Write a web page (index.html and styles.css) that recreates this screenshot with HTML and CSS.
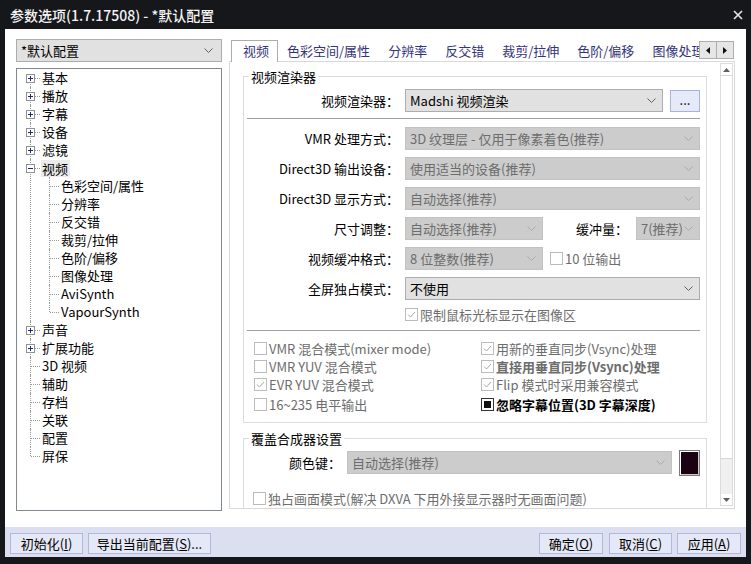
FILE: index.html
```html
<!DOCTYPE html>
<html lang="zh-CN">
<head>
    <meta charset="UTF-8">
    <title>参数选项</title>
    <link rel="stylesheet" href="styles.css">
</head>
<body>
    <div class="window">
        <div class="titlebar">
            <span class="title">参数选项(1.7.17508) - *默认配置</span>
            <svg class="close" width="10" height="10" viewBox="0 0 10 10"><path d="M1 1l8 8M9 1l-8 8" stroke="#e8e8e8" stroke-width="1.6"/></svg>
        </div>
        <div class="client">
            <div class="main">
                <div class="side">
                    <div class="combo">
                        <span class="val">*默认配置</span>
                        <svg class="chev" width="9" height="5" viewBox="0 0 9 5"><path d="M0.5 0.5l4 4 4-4" fill="none" stroke="#606060"/></svg>
                    </div>
                    <div class="tree-box">
                        <ul class="tree">
                            <li><div class="row"><svg class="exp" width="9" height="9" viewBox="0 0 9 9"><rect x="0.5" y="0.5" width="8" height="8" fill="#fff" stroke="#919191"/><path d="M2 4.5h5M4.5 2v5" stroke="#1f2b6b"/></svg><span class="label">基本</span></div></li>
                            <li><div class="row"><svg class="exp" width="9" height="9" viewBox="0 0 9 9"><rect x="0.5" y="0.5" width="8" height="8" fill="#fff" stroke="#919191"/><path d="M2 4.5h5M4.5 2v5" stroke="#1f2b6b"/></svg><span class="label">播放</span></div></li>
                            <li><div class="row"><svg class="exp" width="9" height="9" viewBox="0 0 9 9"><rect x="0.5" y="0.5" width="8" height="8" fill="#fff" stroke="#919191"/><path d="M2 4.5h5M4.5 2v5" stroke="#1f2b6b"/></svg><span class="label">字幕</span></div></li>
                            <li><div class="row"><svg class="exp" width="9" height="9" viewBox="0 0 9 9"><rect x="0.5" y="0.5" width="8" height="8" fill="#fff" stroke="#919191"/><path d="M2 4.5h5M4.5 2v5" stroke="#1f2b6b"/></svg><span class="label">设备</span></div></li>
                            <li><div class="row"><svg class="exp" width="9" height="9" viewBox="0 0 9 9"><rect x="0.5" y="0.5" width="8" height="8" fill="#fff" stroke="#919191"/><path d="M2 4.5h5M4.5 2v5" stroke="#1f2b6b"/></svg><span class="label">滤镜</span></div></li>
                            <li>
                                <div class="row"><svg class="exp" width="9" height="9" viewBox="0 0 9 9"><rect x="0.5" y="0.5" width="8" height="8" fill="#fff" stroke="#919191"/><path d="M2 4.5h5" stroke="#1f2b6b"/></svg><span class="label sel">视频</span></div>
                                <ul class="sub">
                                    <li><div class="row"><span class="label">色彩空间/属性</span></div></li>
                                    <li><div class="row"><span class="label">分辨率</span></div></li>
                                    <li><div class="row"><span class="label">反交错</span></div></li>
                                    <li><div class="row"><span class="label">裁剪/拉伸</span></div></li>
                                    <li><div class="row"><span class="label">色阶/偏移</span></div></li>
                                    <li><div class="row"><span class="label">图像处理</span></div></li>
                                    <li><div class="row"><span class="label">AviSynth</span></div></li>
                                    <li><div class="row"><span class="label">VapourSynth</span></div></li>
                                </ul>
                            </li>
                            <li><div class="row"><svg class="exp" width="9" height="9" viewBox="0 0 9 9"><rect x="0.5" y="0.5" width="8" height="8" fill="#fff" stroke="#919191"/><path d="M2 4.5h5M4.5 2v5" stroke="#1f2b6b"/></svg><span class="label">声音</span></div></li>
                            <li><div class="row"><svg class="exp" width="9" height="9" viewBox="0 0 9 9"><rect x="0.5" y="0.5" width="8" height="8" fill="#fff" stroke="#919191"/><path d="M2 4.5h5M4.5 2v5" stroke="#1f2b6b"/></svg><span class="label">扩展功能</span></div></li>
                            <li><div class="row"><span class="label">3D 视频</span></div></li>
                            <li><div class="row"><span class="label">辅助</span></div></li>
                            <li><div class="row"><span class="label">存档</span></div></li>
                            <li><div class="row"><span class="label">关联</span></div></li>
                            <li><div class="row"><span class="label">配置</span></div></li>
                            <li><div class="row"><span class="label">屏保</span></div></li>
                        </ul>
                    </div>
                </div>

                <div class="content">
                    <div class="tabbar">
                        <div class="tabs">
                            <span class="tab active">视频</span>
                            <span class="tab">色彩空间/属性</span>
                            <span class="tab">分辨率</span>
                            <span class="tab">反交错</span>
                            <span class="tab">裁剪/拉伸</span>
                            <span class="tab">色阶/偏移</span>
                            <span class="tab">图像处理</span>
                        </div>
                        <div class="tab-arrows">
                            <span class="arrow-btn"><svg width="4" height="7" viewBox="0 0 4 7"><path d="M4 0v7L0 3.5z" fill="#111"/></svg></span>
                            <span class="arrow-btn"><svg width="4" height="7" viewBox="0 0 4 7"><path d="M0 0v7l4-3.5z" fill="#111"/></svg></span>
                        </div>
                    </div>

                    <div class="panel">
                        <div class="panel-body">
                            <div class="group">
                                <span class="group-title">视频渲染器</span>
                                <div class="field first">
                                    <span class="lbl">视频渲染器：</span>
                                    <div class="combo grow">
                                        <span class="val">Madshi 视频渲染</span>
                                        <svg class="chev" width="9" height="5" viewBox="0 0 9 5"><path d="M0.5 0.5l4 4 4-4" fill="none" stroke="#606060"/></svg>
                                    </div>
                                    <span class="dots-btn">...</span>
                                </div>
                                <div class="sep"></div>
                                <div class="field">
                                    <span class="lbl">VMR 处理方式：</span>
                                    <div class="combo grow off">
                                        <span class="val">3D 纹理层 - 仅用于像素着色(推荐)</span>
                                        <svg class="chev" width="9" height="5" viewBox="0 0 9 5"><path d="M0.5 0.5l4 4 4-4" fill="none" stroke="#ababab"/></svg>
                                    </div>
                                </div>
                                <div class="field">
                                    <span class="lbl">Direct3D 输出设备：</span>
                                    <div class="combo grow off">
                                        <span class="val">使用适当的设备(推荐)</span>
                                        <svg class="chev" width="9" height="5" viewBox="0 0 9 5"><path d="M0.5 0.5l4 4 4-4" fill="none" stroke="#ababab"/></svg>
                                    </div>
                                </div>
                                <div class="field">
                                    <span class="lbl">Direct3D 显示方式：</span>
                                    <div class="combo grow off">
                                        <span class="val">自动选择(推荐)</span>
                                        <svg class="chev" width="9" height="5" viewBox="0 0 9 5"><path d="M0.5 0.5l4 4 4-4" fill="none" stroke="#ababab"/></svg>
                                    </div>
                                </div>
                                <div class="field">
                                    <span class="lbl">尺寸调整：</span>
                                    <div class="combo short off">
                                        <span class="val">自动选择(推荐)</span>
                                        <svg class="chev" width="9" height="5" viewBox="0 0 9 5"><path d="M0.5 0.5l4 4 4-4" fill="none" stroke="#ababab"/></svg>
                                    </div>
                                    <span class="lbl-inline">缓冲量：</span>
                                    <div class="combo tiny off">
                                        <span class="val">7(推荐)</span>
                                        <svg class="chev" width="9" height="5" viewBox="0 0 9 5"><path d="M0.5 0.5l4 4 4-4" fill="none" stroke="#ababab"/></svg>
                                    </div>
                                </div>
                                <div class="field">
                                    <span class="lbl">视频缓冲格式：</span>
                                    <div class="combo short off">
                                        <span class="val">8 位整数(推荐)</span>
                                        <svg class="chev" width="9" height="5" viewBox="0 0 9 5"><path d="M0.5 0.5l4 4 4-4" fill="none" stroke="#ababab"/></svg>
                                    </div>
                                    <label class="chk off after-combo">
                                        <svg class="box" width="13" height="13" viewBox="0 0 13 13"><rect x="0.5" y="0.5" width="12" height="12" fill="#fff" stroke="#bcbcbc"/></svg>10 位输出
                                    </label>
                                </div>
                                <div class="field last">
                                    <span class="lbl">全屏独占模式：</span>
                                    <div class="combo grow">
                                        <span class="val">不使用</span>
                                        <svg class="chev" width="9" height="5" viewBox="0 0 9 5"><path d="M0.5 0.5l4 4 4-4" fill="none" stroke="#606060"/></svg>
                                    </div>
                                </div>
                                <label class="chk off indent">
                                    <svg class="box" width="13" height="13" viewBox="0 0 13 13"><rect x="0.5" y="0.5" width="12" height="12" fill="#fff" stroke="#bcbcbc"/><path d="M3 6.5l2.5 2.5 4.5-5" fill="none" stroke="#a8a8a8"/></svg>限制鼠标光标显示在图像区
                                </label>
                                <div class="sep lower"></div>
                                <div class="checks">
                                    <label class="chk off"><svg class="box" width="13" height="13" viewBox="0 0 13 13"><rect x="0.5" y="0.5" width="12" height="12" fill="#fff" stroke="#bcbcbc"/></svg>VMR 混合模式(mixer mode)</label>
                                    <label class="chk off"><svg class="box" width="13" height="13" viewBox="0 0 13 13"><rect x="0.5" y="0.5" width="12" height="12" fill="#fff" stroke="#bcbcbc"/><path d="M3 6.5l2.5 2.5 4.5-5" fill="none" stroke="#a8a8a8"/></svg>用新的垂直同步(Vsync)处理</label>
                                    <label class="chk off"><svg class="box" width="13" height="13" viewBox="0 0 13 13"><rect x="0.5" y="0.5" width="12" height="12" fill="#fff" stroke="#bcbcbc"/></svg>VMR YUV 混合模式</label>
                                    <label class="chk off strong"><svg class="box" width="13" height="13" viewBox="0 0 13 13"><rect x="0.5" y="0.5" width="12" height="12" fill="#fff" stroke="#bcbcbc"/><path d="M3 6.5l2.5 2.5 4.5-5" fill="none" stroke="#a8a8a8"/></svg>直接用垂直同步(Vsync)处理</label>
                                    <label class="chk off"><svg class="box" width="13" height="13" viewBox="0 0 13 13"><rect x="0.5" y="0.5" width="12" height="12" fill="#fff" stroke="#bcbcbc"/><path d="M3 6.5l2.5 2.5 4.5-5" fill="none" stroke="#a8a8a8"/></svg>EVR YUV 混合模式</label>
                                    <label class="chk off"><svg class="box" width="13" height="13" viewBox="0 0 13 13"><rect x="0.5" y="0.5" width="12" height="12" fill="#fff" stroke="#bcbcbc"/><path d="M3 6.5l2.5 2.5 4.5-5" fill="none" stroke="#a8a8a8"/></svg>Flip 模式时采用兼容模式</label>
                                    <label class="chk off"><svg class="box" width="13" height="13" viewBox="0 0 13 13"><rect x="0.5" y="0.5" width="12" height="12" fill="#fff" stroke="#bcbcbc"/></svg>16~235 电平输出</label>
                                    <label class="chk strong"><svg class="box" width="13" height="13" viewBox="0 0 13 13"><rect x="0.5" y="0.5" width="12" height="12" fill="#fff" stroke="#333"/><rect x="3" y="3" width="7" height="7" fill="#111"/></svg>忽略字幕位置(3D 字幕深度)</label>
                                </div>
                            </div>

                            <div class="group second">
                                <span class="group-title">覆盖合成器设置</span>
                                <div class="field first">
                                    <span class="lbl narrow">颜色键：</span>
                                    <div class="combo grow off">
                                        <span class="val">自动选择(推荐)</span>
                                        <svg class="chev" width="9" height="5" viewBox="0 0 9 5"><path d="M0.5 0.5l4 4 4-4" fill="none" stroke="#ababab"/></svg>
                                    </div>
                                    <span class="swatch"></span>
                                </div>
                                <label class="chk off exclusive"><svg class="box" width="13" height="13" viewBox="0 0 13 13"><rect x="0.5" y="0.5" width="12" height="12" fill="#fff" stroke="#bcbcbc"/></svg>独占画面模式(解决 DXVA 下用外接显示器时无画面问题)</label>
                            </div>
                        </div>
                        <div class="vscroll">
                            <span class="sb-btn"><svg width="7" height="4" viewBox="0 0 7 4"><path d="M0 4h7L3.5 0z" fill="#606060"/></svg></span>
                            <span class="sb-thumb"></span>
                            <span class="sb-track"></span>
                            <span class="sb-btn"><svg width="7" height="4" viewBox="0 0 7 4"><path d="M0 0h7L3.5 4z" fill="#606060"/></svg></span>
                        </div>
                    </div>
                </div>
            </div>

            <div class="footer">
                <span class="btn w-init">初始化(<u>I</u>)</span>
                <span class="btn w-export">导出当前配置(<u>S</u>)...</span>
                <span class="btn w-ok push">确定(<u>O</u>)</span>
                <span class="btn w-cancel">取消(<u>C</u>)</span>
                <span class="btn w-apply">应用(<u>A</u>)</span>
            </div>
        </div>
    </div>
</body>
</html>
```

FILE: styles.css
```css
body {
    margin: 0;
    background-color: #16171b;
    font-family: "Noto Sans CJK SC", "Noto Sans", sans-serif;
    font-size: 13px;
    color: #000;
}

.window {
    width: 751px;
    height: 564px;
    box-sizing: border-box;
    padding: 0 5px 7px;
    display: flex;
    flex-direction: column;
}

.titlebar {
    height: 29px;
    flex: none;
    display: flex;
    align-items: center;
    justify-content: space-between;
    padding: 0 3px 0 5px;
    color: #f4f4f4;
    font-size: 14px;
    font-weight: 500;
}

.client {
    flex: 1;
    background-color: #fff;
    display: flex;
    flex-direction: column;
    min-height: 0;
}

.main {
    flex: 1;
    display: flex;
    gap: 7px;
    padding: 10px 11px 0;
    min-height: 0;
}

/* left column */
.side {
    width: 206px;
    flex: none;
    display: flex;
    flex-direction: column;
}

.combo {
    height: 23px;
    box-sizing: border-box;
    border: 1px solid #adadad;
    background-color: #e1e1e1;
    display: flex;
    align-items: center;
    padding: 0 6px 0 4px;
    white-space: nowrap;
}

.combo .val {
    flex: 1;
    overflow: hidden;
    line-height: 21px;
}

.combo.off {
    background-color: #cccccc;
    border-color: #c2c2c2;
    color: #6d6d6d;
}

.side .combo {
    margin-bottom: 6px;
    padding-right: 8px;
}

.tree-box {
    height: 443px;
    box-sizing: border-box;
    border: 1px solid #828790;
}

.tree,
.tree ul {
    list-style: none;
    margin: 0;
    padding: 0;
}

.tree li {
    position: relative;
}

.tree .row {
    position: relative;
    height: 18px;
    display: flex;
    align-items: center;
    padding-left: 25px;
}

.tree .label {
    line-height: 18px;
    white-space: nowrap;
}

.tree .label.sel {
    background-color: #ebebeb;
    line-height: 17px;
    margin-left: -1px;
    padding: 0 2px 0 1px;
}

.tree > li::before {
    content: "";
    position: absolute;
    left: 13px;
    top: 0;
    bottom: 0;
    border-left: 1px dotted #9a9a9a;
}

.tree > li:first-child::before {
    top: 9px;
}

.tree > li:last-child::before {
    bottom: auto;
    height: 9px;
}

.tree > li > .row::before {
    content: "";
    position: absolute;
    left: 14px;
    top: 9px;
    width: 9px;
    border-top: 1px dotted #9a9a9a;
}

.tree .exp {
    position: absolute;
    left: 9px;
    top: 5px;
    z-index: 1;
}

.tree .sub li::before {
    content: "";
    position: absolute;
    left: 32px;
    top: 0;
    bottom: 0;
    border-left: 1px dotted #9a9a9a;
}

.tree .sub li:last-child::before {
    bottom: auto;
    height: 9px;
}

.tree .sub .row {
    padding-left: 44px;
}

.tree .sub .row::before {
    content: "";
    position: absolute;
    left: 33px;
    top: 9px;
    width: 9px;
    border-top: 1px dotted #9a9a9a;
}

/* right column */
.content {
    flex: 1;
    min-width: 0;
    display: flex;
    flex-direction: column;
}

.tabbar {
    height: 22px;
    flex: none;
    display: flex;
    position: relative;
    z-index: 1;
}

.tabs {
    flex: 1;
    height: 23px;
    margin-bottom: -1px;
    padding-left: 2px;
    display: flex;
    align-items: flex-end;
    overflow: hidden;
}

.tab {
    flex: none;
    height: 21px;
    line-height: 19px;
    padding: 0 9px;
    color: #34347a;
    white-space: nowrap;
}

.tab.active {
    height: 22px;
    box-sizing: border-box;
    line-height: 19px;
    padding: 0 8px 0 11px;
    background-color: #fff;
    border: 1px solid #acacac;
    border-bottom: none;
}

.tab-arrows {
    flex: none;
    display: flex;
    margin: 2px 1px 0 0;
}

.arrow-btn {
    width: 18px;
    height: 18px;
    box-sizing: border-box;
    border: 1px solid #adadad;
    background-color: #e6e6e6;
    display: flex;
    align-items: center;
    justify-content: center;
}

.arrow-btn + .arrow-btn {
    margin-left: -1px;
}

.panel {
    height: 448px;
    flex: none;
    box-sizing: border-box;
    border: 1px solid #d9d9d9;
    display: flex;
}

.panel-body {
    flex: 1;
    min-width: 0;
    overflow: hidden;
    padding: 14px 0 0 13px;
}

.group {
    width: 464px;
    box-sizing: border-box;
    border: 1px solid #dcdcdc;
    padding: 0 6px 8px 0;
}

.group.second {
    margin-top: 15px;
}

.group-title {
    display: table;
    margin: -9px 0 0 5px;
    padding: 0 2px;
    line-height: 17px;
    background-color: #fff;
}

.field {
    height: 23px;
    display: flex;
    align-items: center;
    margin-bottom: 7px;
}

.field.first {
    margin-top: 4px;
    margin-bottom: 0;
}

.field.last {
    margin-bottom: 5px;
}

.lbl {
    width: 155px;
    flex: none;
    margin-right: 6px;
    text-align: right;
    white-space: nowrap;
}

.lbl.narrow {
    width: 97px;
}

.combo.grow {
    flex: 1;
    min-width: 0;
}

.combo.short {
    width: 138px;
    flex: none;
}

.combo.tiny {
    width: 64px;
    flex: none;
}

.lbl-inline {
    flex: 1;
    text-align: right;
    margin-right: 8px;
    white-space: nowrap;
}

.dots-btn {
    width: 30px;
    height: 22px;
    box-sizing: border-box;
    flex: none;
    margin-left: 7px;
    border: 1px solid #a9b3dd;
    background-color: #e6eaf8;
    text-align: center;
    line-height: 18px;
}

.sep {
    height: 1px;
    background-color: #a0a0a0;
    margin: 6px 0 8px 3px;
}

.sep.lower {
    margin-top: 7px;
}

.chk {
    display: flex;
    align-items: center;
    white-space: nowrap;
    height: 18px;
}

.chk .box {
    flex: none;
    margin-right: 2px;
}

.chk.off {
    color: #6d6d6d;
}

.chk.strong {
    font-weight: bold;
}

.chk.indent {
    margin-left: 161px;
}

.chk.after-combo {
    margin-left: 7px;
}

.chk.exclusive {
    margin: 15px 0 0 9px;
}

.checks {
    display: grid;
    grid-template-columns: 227px 1fr;
    grid-template-rows: 18px 18px 19px 20px;
    padding-left: 10px;
}

.checks .chk {
    height: auto;
}

.swatch {
    width: 21px;
    height: 26px;
    box-sizing: border-box;
    flex: none;
    margin-left: 7px;
    border: 1px solid #7a7a7a;
    box-shadow: inset 1px 1px 0 #fff, inset -1px -1px 0 #c8c8c8;
    background-color: #1a0212;
}

.vscroll {
    width: 13px;
    flex: none;
    box-sizing: border-box;
    margin: 1px 1px 2px 0;
    border: 1px solid #dcdcdc;
    background-color: #f0f0f0;
    display: flex;
    flex-direction: column;
}

.sb-btn {
    height: 11px;
    flex: none;
    display: flex;
    align-items: center;
    justify-content: center;
    background-color: #fff;
}

.sb-thumb {
    height: 384px;
    flex: none;
    box-sizing: border-box;
    border-top: 1px solid #d6d6d6;
    border-bottom: 1px solid #d6d6d6;
    background-color: #fff;
}

.sb-track {
    flex: 1;
}

/* bottom buttons */
.footer {
    height: 30px;
    flex: none;
    box-sizing: border-box;
    padding: 6px 5px 0;
    display: flex;
    align-items: flex-start;
    gap: 5px;
    background-color: #dcdff0;
}

.btn {
    height: 21px;
    box-sizing: border-box;
    border: 1px solid #b1b8df;
    background-color: #e5e8f6;
    display: flex;
    align-items: center;
    justify-content: center;
    white-space: nowrap;
    line-height: 19px;
}

.btn.push {
    margin-left: auto;
}

.w-init { width: 73px; }
.w-export { width: 123px; }
.w-ok { width: 64px; }
.w-cancel { width: 63px; margin-left: 1px; }
.w-apply { width: 64px; }
```
